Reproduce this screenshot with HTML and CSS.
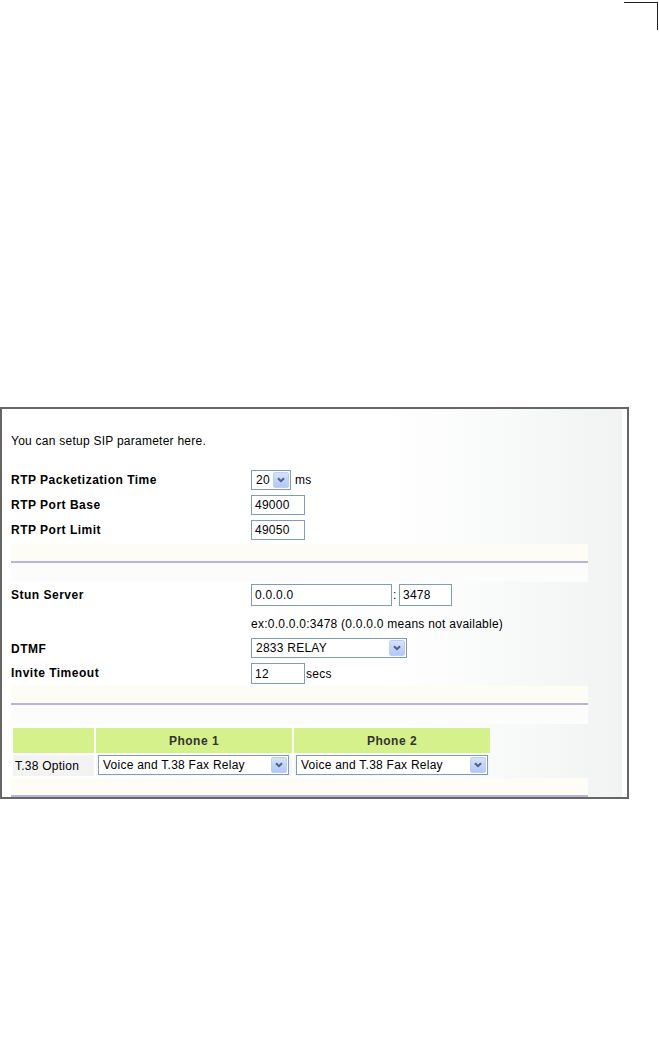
FILE: index.html
```html
<!DOCTYPE html>
<html>
<head>
<meta charset="utf-8">
<link rel="stylesheet" href="styles.css">
</head>
<body>
<div class="page">
  <div class="mark"></div>
  <div class="frame">
    <div class="panel">
      <p class="intro">You can setup SIP parameter here.</p>

      <div class="group g1">
        <div class="label">RTP Packetization Time</div>
        <div class="ctrl">
          <div class="sel w40"><span class="val">20</span><span class="btn"><svg width="8" height="6" viewBox="0 0 8 6"><path d="M1 1.2 L4 4.2 L7 1.2" fill="none" stroke="#4d6185" stroke-width="2"/></svg></span></div>
          <span class="unit ms">ms</span>
        </div>
        <div class="label">RTP Port Base</div>
        <div class="ctrl"><div class="inp w54">49000</div></div>
        <div class="label">RTP Port Limit</div>
        <div class="ctrl"><div class="inp w54">49050</div></div>
      </div>

      <div class="sep"><div class="pale"></div><div class="line"></div><div class="white"></div></div>

      <div class="group g2">
        <div class="label r22">Stun Server</div>
        <div class="ctrl r22">
          <div class="inp w141 h22">0.0.0.0</div>
          <span class="colon">:</span>
          <div class="inp w53 h22">3478</div>
        </div>
        <div class="label hint-gap"></div>
        <div class="ctrl hint">ex:0.0.0.0:3478 (0.0.0.0 means not available)</div>
        <div class="label r21 dt low">DTMF</div>
        <div class="ctrl r21 dt">
          <div class="sel w156 h21"><span class="val">2833 RELAY</span><span class="btn"><svg width="8" height="6" viewBox="0 0 8 6"><path d="M1 1.2 L4 4.2 L7 1.2" fill="none" stroke="#4d6185" stroke-width="2"/></svg></span></div>
        </div>
        <div class="label r21 inv">Invite Timeout</div>
        <div class="ctrl r21 inv">
          <div class="inp w54 h21">12</div>
          <span class="unit secs">secs</span>
        </div>
      </div>

      <div class="sep"><div class="pale"></div><div class="line"></div><div class="white"></div></div>

      <table class="phones">
        <colgroup><col class="k1"><col class="k2"><col class="k3"></colgroup>
        <tr class="head">
          <th></th>
          <th>Phone 1</th>
          <th>Phone 2</th>
        </tr>
        <tr class="data">
          <td class="opt">T.38 Option</td>
          <td class="selcell">
            <div class="sel w191"><span class="val">Voice and T.38 Fax Relay</span><span class="btn"><svg width="8" height="6" viewBox="0 0 8 6"><path d="M1 1.2 L4 4.2 L7 1.2" fill="none" stroke="#4d6185" stroke-width="2"/></svg></span></div>
          </td>
          <td class="selcell">
            <div class="sel w192"><span class="val">Voice and T.38 Fax Relay</span><span class="btn"><svg width="8" height="6" viewBox="0 0 8 6"><path d="M1 1.2 L4 4.2 L7 1.2" fill="none" stroke="#4d6185" stroke-width="2"/></svg></span></div>
          </td>
        </tr>
      </table>

      <div class="sep last"><div class="pale"></div><div class="line"></div></div>
    </div>
  </div>
</div>
</body>
</html>
```

FILE: styles.css
```css
* { box-sizing: border-box; }
html, body { margin: 0; padding: 0; background: #fff; }
body {
  font-family: "Liberation Sans", Arial, sans-serif;
  font-size: 12px;
  color: #000;
  letter-spacing: 0.25px;
}
.page { padding-top: 2px; }
.mark {
  margin-left: 624px;
  width: 34px;
  height: 28px;
  border-top: 1px solid #231f20;
  border-right: 1px solid #231f20;
}
.frame {
  margin-top: 377px;
  width: 629px;
  height: 392px;
  border: 2px solid #666;
  padding-right: 5px;
  background: #fff;
}
.panel {
  width: 620px;
  height: 388px;
  padding: 25px 0 0 9px;
  background: linear-gradient(to right, #ffffff 0%, #ffffff 62%, #f7f8f8 85%, #f1f2f2 100%);
  display: flex;
  flex-direction: column;
  align-items: flex-start;
}
.intro {
  margin: 0;
  height: 15px;
  line-height: 15px;
}
.group {
  display: grid;
  grid-template-columns: 240px auto;
  align-items: center;
}
.g1 {
  margin-top: 21px;
  grid-auto-rows: 20px;
  row-gap: 5px;
  margin-bottom: 4px;
}
.g2 { margin-top: 2px; margin-bottom: 2px; }
.label {
  font-weight: bold;
  letter-spacing: 0.5px;
  line-height: 15px;
  white-space: nowrap;
  display: flex;
  align-items: center;
  height: 100%;
}
.label.low { padding-top: 4px; }
.ctrl {
  display: flex;
  align-items: center;
  height: 100%;
}
.r22 { height: 22px; }
.r21 { height: 21px; }
.hint { height: 15px; line-height: 15px; margin-top: 11px; white-space: nowrap; }
.hint-gap { height: 15px; margin-top: 11px; }
.dt { margin-top: 5px; }
.inv { margin-top: 5px; }

.inp {
  height: 20px;
  border: 1px solid #7f9db9;
  background: #fff;
  padding-left: 3px;
  display: flex;
  align-items: center;
  white-space: nowrap;
}
.h22 { height: 22px; }
.h21 { height: 21px; }
.w54 { width: 54px; }
.w53 { width: 53px; }
.w141 { width: 141px; }
.colon { width: 7px; padding-left: 1px; }
.unit.ms { margin-left: 4px; }
.unit.secs { margin-left: 1px; }

.sel {
  height: 20px;
  border: 1px solid #7f9db9;
  background: #fff;
  padding: 1px;
  display: flex;
  align-items: stretch;
}
.sel .val {
  flex: 1;
  padding-left: 3px;
  display: flex;
  align-items: center;
  white-space: nowrap;
  overflow: hidden;
}
.sel .btn {
  width: 16px;
  border: 1px solid #bccdf6;
  border-radius: 2px;
  background: linear-gradient(to bottom, #d7e2fc 0%, #c3d4fb 50%, #b4c7f6 100%);
  display: flex;
  align-items: center;
  justify-content: center;
}
.w40 { width: 40px; }
.w156 { width: 156px; }
.w191 { width: 191px; }
.w192 { width: 192px; }

.sep { width: 577px; flex: none; }
.sep .pale { height: 17px; background: #fdfdf6; }
.sep .line { height: 2px; background: #b9b4dc; }
.sep .white { height: 19px; background: #fcfcfc; }

.phones {
  margin-top: 2px;
  border-collapse: separate;
  border-spacing: 2px;
  table-layout: fixed;
  width: 481px;
  flex: none;
}
.phones col.k1 { width: 81px; }
.phones col.k2, .phones col.k3 { width: 196px; }
.phones th, .phones td { padding: 0; }
.phones .head th {
  height: 25px;
  background: #d5f18b;
  color: #333;
  font-weight: bold;
  letter-spacing: 0.5px;
  text-align: center;
  font-size: 12px;
}
.phones .data td { height: 21px; }
.phones .opt {
  background: #f3f3f3;
  padding-left: 2px;
  white-space: nowrap;
}
.phones .selcell {
  background: #f6f6f6;
  padding: 0 2px;
  vertical-align: top;
}
```
